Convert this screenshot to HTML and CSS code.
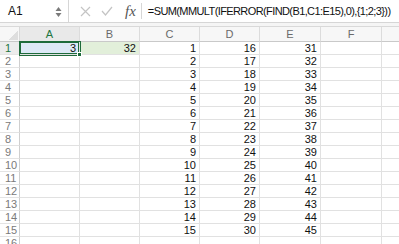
FILE: index.html
```html
<!DOCTYPE html>
<html lang="en">
<head>
    <meta charset="UTF-8">
    <title>Sheet</title>
    <link rel="stylesheet" href="styles.css">
</head>
<body>
    <!-- formula bar -->
    <div class="formulaBar">
        <div class="nameBox">
            <span>A1</span>
            <svg class="spin" width="7" height="12" viewBox="0 0 7 12">
                <path d="M3.5 1 L6.5 5 L0.5 5 Z" fill="#7a7a7a"/>
                <path d="M3.5 11 L6.5 7 L0.5 7 Z" fill="#7a7a7a"/>
            </svg>
        </div>
        <div class="tools">
            <svg width="11" height="11" viewBox="0 0 11 11">
                <path d="M1 1 L10 10 M10 1 L1 10" stroke="#c4c4c4" stroke-width="1.2"/>
            </svg>
            <svg width="12" height="10" viewBox="0 0 12 10">
                <path d="M1 5 L4.5 9 L11 1" stroke="#c4c4c4" stroke-width="1.2" fill="none"/>
            </svg>
            <span class="fx">fx</span>
        </div>
        <div class="formula">=SUM(MMULT(IFERROR(FIND(B1,C1:E15),0),{1;2;3}))</div>
    </div>
    <div class="gap"></div>

    <!-- grid -->
    <div class="sheet" id="sheet">
        <div class="corner"></div>
        <div class="colHead sel">A</div>
        <div class="colHead">B</div>
        <div class="colHead">C</div>
        <div class="colHead">D</div>
        <div class="colHead">E</div>
        <div class="colHead">F</div>
        <div class="colHead"></div>
    </div>

    <script>
        var oSheet = document.getElementById('sheet');
        for(var r=1; r<=16; r++){
            var html = '<div class="rowHead' + (r == 1 ? ' sel' : '') + '">' + r + '</div>';
            var a = '', b = '', c = '', d = '', e = '';
            if(r == 1){ a = '3'; b = '32'; }
            if(r <= 15){ c = r; d = r + 15; e = r + 30; }
            html += '<div class="cell' + (r == 1 ? ' active' : '') + '">' + a + (r == 1 ? '<i class="handle"></i>' : '') + '</div>';
            html += '<div class="cell' + (r == 1 ? ' green' : '') + '">' + b + '</div>';
            html += '<div class="cell">' + c + '</div>';
            html += '<div class="cell">' + d + '</div>';
            html += '<div class="cell">' + e + '</div>';
            html += '<div class="cell"></div>';
            html += '<div class="cell"></div>';
            oSheet.insertAdjacentHTML('beforeend', html);
        }
    </script>
</body>
</html>
```

FILE: styles.css
```css
* {
    margin: 0;
    padding: 0;
    box-sizing: border-box;
}
body {
    width: 399px;
    height: 244px;
    overflow: hidden;
    background: #fff;
    font-family: "Liberation Sans", Arial, sans-serif;
    color: #111;
}
.formulaBar {
    height: 23px;
    display: flex;
    align-items: center;
    border-bottom: 1px solid #d6d6d6;
    overflow: hidden;
}
.nameBox {
    flex-shrink: 0;
    width: 69px;
    height: 22px;
    display: flex;
    align-items: center;
    justify-content: space-between;
    padding: 0 6px 0 8px;
    border-right: 1px solid #d6d6d6;
    font-size: 12px;
}
.nameBox .spin {
    margin-top: 1px;
}
.tools {
    flex-shrink: 0;
    display: flex;
    align-items: center;
    gap: 10px;
    padding-left: 11px;
    padding-right: 5px;
    height: 16px;
    border-right: 1px solid #d6d6d6;
}
.tools .fx {
    font-family: "Liberation Serif", "Times New Roman", serif;
    font-style: italic;
    font-size: 15px;
    color: #555;
    margin-left: 2px;
    line-height: 16px;
}
.formula {
    padding-left: 6px;
    font-size: 11px;
    white-space: nowrap;
    letter-spacing: -0.6px;
}
.gap {
    height: 4px;
    background: #f5f5f5;
    border-bottom: 1px solid #d9d9d9;
}
.sheet {
    display: grid;
    grid-template-columns: 20px 60px 60px 60px 60px 61px 61px 60px;
    grid-template-rows: 15px;
    grid-auto-rows: 13px;
    font-size: 11px;
}
.corner {
    background: linear-gradient(135deg, #f7f7f7 60%, #dedede 60%);
    border-right: 1px solid #d9d9d9;
    border-bottom: 1px solid #c9c9c9;
    background-size: 13px 10px;
    background-repeat: no-repeat;
    background-position: 5px 3px;
    background-color: #f7f7f7;
}
.colHead {
    background: #f7f7f7;
    color: #6a6a6a;
    text-align: center;
    line-height: 14px;
    border-right: 1px solid #dcdcdc;
    border-bottom: 1px solid #c9c9c9;
}
.colHead.sel {
    color: #21763f;
    background: #e9e9e9;
    border-bottom: 1px solid #217346;
}
.rowHead {
    color: #7a7a7a;
    text-align: left;
    padding-left: 5px;
    line-height: 12px;
    border-right: 1px solid #cfcfcf;
    border-bottom: 1px solid #e4e4e4;
}
.rowHead.sel {
    color: #21763f;
    background: #ececec;
}
.cell {
    position: relative;
    text-align: right;
    padding-right: 3px;
    line-height: 12px;
    border-right: 1px solid #e1e1e1;
    border-bottom: 1px solid #e1e1e1;
}
.cell.active {
    background: #dde9f6;
    box-shadow: 0 0 0 1px #1e6b3b, inset 0 0 0 1px #1e6b3b;
    z-index: 1;
}
.cell.green {
    background: #e2efda;
}
.handle {
    position: absolute;
    right: -3px;
    bottom: -3px;
    width: 5px;
    height: 5px;
    background: #1e6b3b;
    border: 1px solid #fff;
}
```
